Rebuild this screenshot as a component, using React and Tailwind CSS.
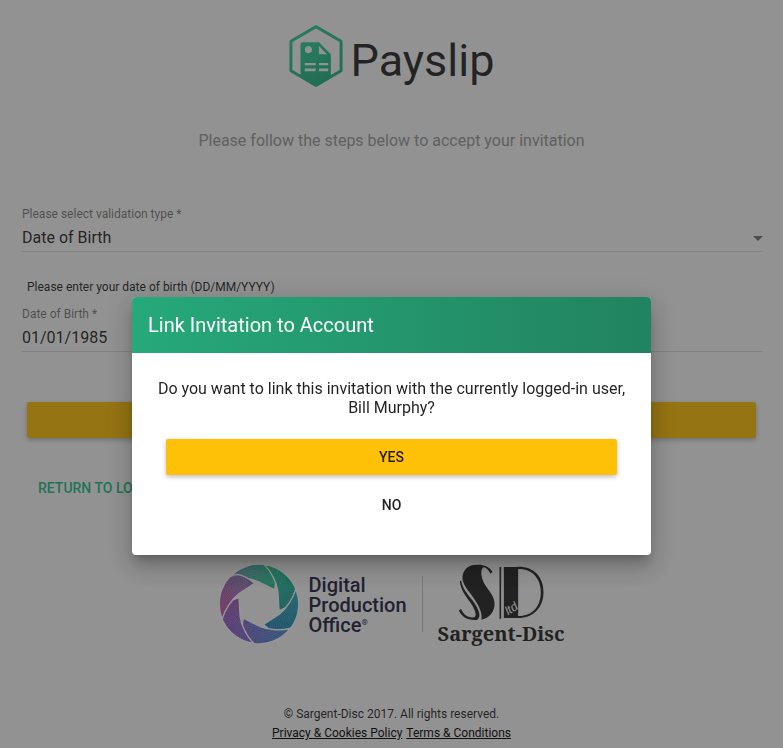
import React from "react";

function HexLogo() {
  return (
    <svg viewBox="0 0 162 188" className="h-[62px] w-[54px]" aria-hidden="true">
      <defs>
        <linearGradient id="hexFill" x1="0" y1="0" x2="0.4" y2="1">
          <stop offset="0" stopColor="#30cf9c" />
          <stop offset="1" stopColor="#22b582" />
        </linearGradient>
      </defs>
      <path d="M81 5 L157 49 V139 L81 183 L5 139 V49 Z" fill="none" stroke="url(#hexFill)" strokeWidth="9" strokeLinejoin="round" />
      <path
        fillRule="evenodd"
        fill="url(#hexFill)"
        d="M34 58 Q34 52 40 52 H90 L126 89 V156 L81 183 L34 156 Z M58 64 a11 11 0 1 0 0.1 0 Z M90 64 V89 H114 Z M47 115 V122 H80 V115 Z M90 115 V122 H118 V115 Z M47 132 V140 H80 V132 Z M90 132 V140 H118 V132 Z"
      />
    </svg>
  );
}

const BLADES = [
  ["#6d8fb4", "#22c793"],
  ["#14c884", "#1f9fa0"],
  ["#20a8b0", "#2080b8"],
  ["#3a84cc", "#7a68cc"],
  ["#7060d0", "#9c58bc"],
  ["#cc48a4", "#8a74b4"],
];

const RIPPLES = [14, 21, 28, 35, 42, 49, 56, 63, 70, 77, 84];

function ApertureLogo() {
  return (
    <svg viewBox="-117 -117 234 234" className="size-20" aria-hidden="true">
      <defs>
        <path id="blade" d="M46 -41 L-4 -66 C-30 -77 -66 -78 -92 -71 A117 117 0 0 1 26 -114 C46 -104 54 -84 46 -41 Z" />
        <clipPath id="bladeClip">
          <use href="#blade" />
        </clipPath>
        {BLADES.map(([from, to], i) => (
          <linearGradient key={i} id={"blade" + i} gradientUnits="userSpaceOnUse" x1="-90" y1="-75" x2="45" y2="-70">
            <stop offset="0" stopColor={from} />
            <stop offset="1" stopColor={to} />
          </linearGradient>
        ))}
      </defs>
      <circle r="112" fill="none" stroke="#fff" strokeWidth="8" />
      {BLADES.map((_, i) => (
        <g key={i} transform={`rotate(${i * 60})`}>
          <use href="#blade" fill={`url(#blade${i})`} stroke="#fff" strokeWidth="4" />
          <g clipPath="url(#bladeClip)" fill="none" stroke="#fff" strokeOpacity="0.25" strokeWidth="1.5">
            {RIPPLES.map((r) => (
              <ellipse key={r} cx="-26" cy="-112" rx={r * 1.2} ry={r * 0.65} transform="rotate(12 -26 -112)" />
            ))}
          </g>
        </g>
      ))}
    </svg>
  );
}

function SargentMark() {
  return (
    <svg viewBox="137 28 254 168" className="h-14 w-[85px]" aria-hidden="true">
      <g fill="#242424">
        <path d="M237 51 C228 36 210 29 190 30 C162 30 145 48 147 74 C151 96 168 112 182 132 C196 154 207 172 204 195 C229 190 245 168 243 144 C241 120 222 104 211 84 C202 64 200 44 211 37 C220 40 226 48 231 57 Z" />
        <path d="M139 78 C141 104 155 122 169 141 C183 161 192 182 182 188 C164 190 150 181 143 163 L136 167 C144 187 164 199 192 195 C206 182 192 158 177 137 C162 117 148 104 143 78 Z" />
        <path d="M258 37 H263 V192 H258 Z M271 37 H314 V190 H271 Z" />
        <path fillRule="evenodd" d="M312 36 C360 34 390 66 390 112 C390 160 358 191 312 190 V184 C354 186 382 158 382 112 C382 70 354 40 312 43 Z" />
      </g>
      <text x="284" y="182" fill="#fff" fontSize="36" fontStyle="italic" fontFamily="Liberation Sans, sans-serif" transform="rotate(-34 284 182)">
        ltd
      </text>
    </svg>
  );
}

function Logos() {
  return (
    <div className="flex items-start justify-center">
      <ApertureLogo />
      <div className="mt-[11px] ml-2.5 text-xl leading-5 font-medium text-[#1f2440]">
        <p>Digital</p>
        <p>Production</p>
        <p className="flex items-start">
          Office<span className="mt-0.5 text-[8px] leading-3">®</span>
        </p>
      </div>
      <div className="mx-[15px] mt-3 h-14 w-px bg-black/20" />
      <div className="flex flex-col items-center">
        <SargentMark />
        <p className="mt-0.5 font-['Noto_Serif','Liberation_Serif',serif] text-xl leading-6 font-bold text-[#242424]">Sargent-Disc</p>
      </div>
    </div>
  );
}

const fieldClass =
  "block h-[30px] w-full appearance-none rounded-none border-0 border-b border-black/12 bg-transparent p-0 pt-0.5 text-base text-black/87 outline-none";
const labelClass = "block text-xs leading-4 text-black/54";

export default function App() {
  return (
    <div className="min-h-screen bg-[#fafafa] font-[Roboto,sans-serif] text-black/87">
      <main className="px-5 pt-[25px]">
        <header className="flex flex-col items-center">
          <h1 className="flex items-start gap-2 text-[45px] leading-[72px]">
            <HexLogo />
            Payslip
          </h1>
          <p className="mt-8 text-base text-[#999]">Please follow the steps below to accept your invitation</p>
        </header>

        <form className="mt-[53px]" onSubmit={(e) => e.preventDefault()}>
          <div className="pl-0.5">
            <label htmlFor="type" className={labelClass}>
              Please select validation type *
            </label>
            <div className="relative">
              <select id="type" className={fieldClass}>
                <option>Date of Birth</option>
              </select>
              <span className="pointer-events-none absolute top-3.5 right-0 border-x-5 border-t-5 border-x-transparent border-t-black/54" />
            </div>
          </div>
          <p className="mt-[27px] px-[7px] text-xs leading-4">Please enter your date of birth (DD/MM/YYYY)</p>
          <div className="mt-[11px] pl-0.5">
            <label htmlFor="dob" className={labelClass}>
              Date of Birth *
            </label>
            <input id="dob" type="text" defaultValue="01/01/1985" className={fieldClass} />
          </div>
          <div className="mt-[50px] px-[7px]">
            <button type="submit" className="block h-9 w-full rounded-xs bg-[#ffc107] text-sm font-medium uppercase shadow-[0_2px_5px_rgba(0,0,0,0.26)]">
              Validate
            </button>
          </div>
          <a href="#login" className="mt-8 ml-[18px] inline-block text-sm leading-9 font-medium text-[#22c08a] uppercase">
            Return to Login
          </a>
        </form>

        <footer className="mt-[58px] flex flex-col items-center pb-1">
          <Logos />
          <p className="mt-[59px] text-xs leading-[19px]">© Sargent-Disc 2017. All rights reserved.</p>
          <p className="flex gap-1 text-xs leading-[19px] text-black">
            <a href="#privacy" className="underline">Privacy &amp; Cookies Policy</a>
            <a href="#terms" className="underline">Terms &amp; Conditions</a>
          </p>
        </footer>
      </main>

      <div className="fixed inset-0 flex items-center justify-center bg-[#212121]/48 px-4 pt-[104px]">
        <section
          role="dialog"
          aria-modal="true"
          aria-labelledby="dialog-title"
          className="w-full max-w-[519px] overflow-hidden rounded bg-white shadow-[0_7px_8px_-4px_rgba(0,0,0,0.2),0_13px_19px_2px_rgba(0,0,0,0.14),0_5px_24px_4px_rgba(0,0,0,0.12)]"
        >
          <h2 id="dialog-title" className="bg-linear-to-r from-[#26a97b] to-[#21835f] px-4 text-xl leading-14 text-white">
            Link Invitation to Account
          </h2>
          <div className="px-6 pt-[26px] pb-8 text-center">
            <p className="text-base leading-[19px]">
              Do you want to link this invitation with the currently logged-in user, Bill Murphy?
            </p>
            <div className="mt-[22px] flex flex-col gap-3 px-2.5">
              <button type="button" className="h-9 rounded-xs bg-[#ffc107] text-sm font-medium shadow-[0_2px_5px_rgba(0,0,0,0.26)]">
                YES
              </button>
              <button type="button" className="h-9 rounded-xs text-sm font-medium">
                NO
              </button>
            </div>
          </div>
        </section>
      </div>
    </div>
  );
}
